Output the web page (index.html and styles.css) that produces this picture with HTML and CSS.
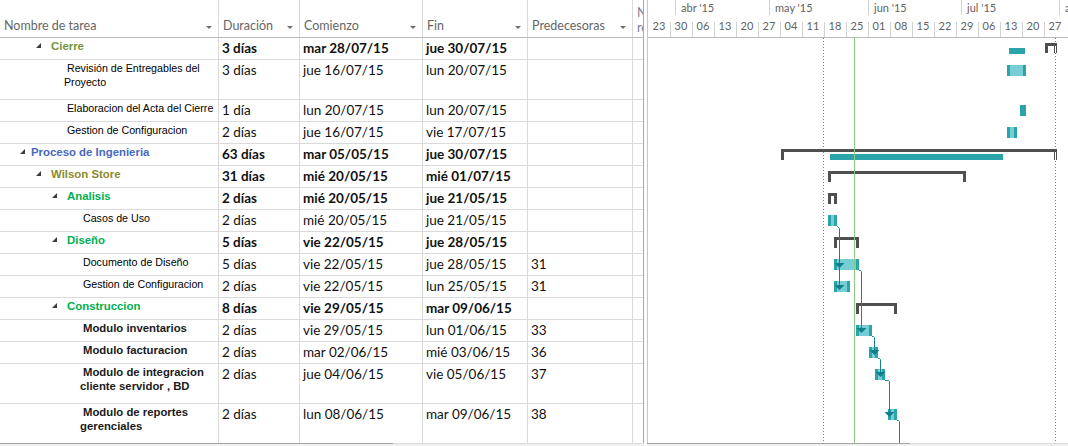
FILE: index.html
```html
<!DOCTYPE html>
<html lang="es">
<head>
<meta charset="utf-8">
<title>Diagrama de Gantt</title>
<link rel="stylesheet" href="styles.css">
</head>
<body>
<div class="app">
  <div class="main">
    <div class="tbl">
      <div class="row hrow">
        <div class="c w-name hc"><span>Nombre de tarea</span><i class="dd"></i></div>
        <div class="c w-dur hc"><span>Duración</span><i class="dd"></i></div>
        <div class="c w-start hc"><span>Comienzo</span><i class="dd"></i></div>
        <div class="c w-fin hc"><span>Fin</span><i class="dd"></i></div>
        <div class="c w-pred hc"><span>Predecesoras</span><i class="dd"></i></div>
        <div class="c w-n hn">Nombres de los<br>recursos</div>
      </div>

      <div class="row">
        <div class="c w-name nm sum l1"><svg class="tg" viewBox="0 0 5 5"><path d="M5 0V5H0Z"/></svg><span class="tx col-cierre">Cierre</span></div>
        <div class="c w-dur d b">3 días</div>
        <div class="c w-start d b">mar 28/07/15</div>
        <div class="c w-fin d b">jue 30/07/15</div>
        <div class="c w-pred d"></div>
        <div class="c w-n"></div>
      </div>
      <div class="row tall">
        <div class="c w-name nm task t2"><span class="tx">Revisión de Entregables del Proyecto</span></div>
        <div class="c w-dur d">3 días</div>
        <div class="c w-start d">jue 16/07/15</div>
        <div class="c w-fin d">lun 20/07/15</div>
        <div class="c w-pred d"></div>
        <div class="c w-n"></div>
      </div>
      <div class="row">
        <div class="c w-name nm task t2"><span class="tx">Elaboracion del Acta del Cierre</span></div>
        <div class="c w-dur d">1 día</div>
        <div class="c w-start d">lun 20/07/15</div>
        <div class="c w-fin d">lun 20/07/15</div>
        <div class="c w-pred d"></div>
        <div class="c w-n"></div>
      </div>
      <div class="row">
        <div class="c w-name nm task t2"><span class="tx">Gestion de Configuracion</span></div>
        <div class="c w-dur d">2 días</div>
        <div class="c w-start d">jue 16/07/15</div>
        <div class="c w-fin d">vie 17/07/15</div>
        <div class="c w-pred d"></div>
        <div class="c w-n"></div>
      </div>
      <div class="row">
        <div class="c w-name nm sum l0"><svg class="tg" viewBox="0 0 5 5"><path d="M5 0V5H0Z"/></svg><span class="tx col-proc">Proceso de Ingenieria</span></div>
        <div class="c w-dur d b">63 días</div>
        <div class="c w-start d b">mar 05/05/15</div>
        <div class="c w-fin d b">jue 30/07/15</div>
        <div class="c w-pred d"></div>
        <div class="c w-n"></div>
      </div>
      <div class="row">
        <div class="c w-name nm sum l1"><svg class="tg" viewBox="0 0 5 5"><path d="M5 0V5H0Z"/></svg><span class="tx col-wilson">Wilson Store</span></div>
        <div class="c w-dur d b">31 días</div>
        <div class="c w-start d b">mié 20/05/15</div>
        <div class="c w-fin d b">mié 01/07/15</div>
        <div class="c w-pred d"></div>
        <div class="c w-n"></div>
      </div>
      <div class="row">
        <div class="c w-name nm sum l2"><svg class="tg" viewBox="0 0 5 5"><path d="M5 0V5H0Z"/></svg><span class="tx col-green">Analisis</span></div>
        <div class="c w-dur d b">2 días</div>
        <div class="c w-start d b">mié 20/05/15</div>
        <div class="c w-fin d b">jue 21/05/15</div>
        <div class="c w-pred d"></div>
        <div class="c w-n"></div>
      </div>
      <div class="row">
        <div class="c w-name nm task t3"><span class="tx">Casos de Uso</span></div>
        <div class="c w-dur d">2 días</div>
        <div class="c w-start d">mié 20/05/15</div>
        <div class="c w-fin d">jue 21/05/15</div>
        <div class="c w-pred d"></div>
        <div class="c w-n"></div>
      </div>
      <div class="row">
        <div class="c w-name nm sum l2"><svg class="tg" viewBox="0 0 5 5"><path d="M5 0V5H0Z"/></svg><span class="tx col-green">Diseño</span></div>
        <div class="c w-dur d b">5 días</div>
        <div class="c w-start d b">vie 22/05/15</div>
        <div class="c w-fin d b">jue 28/05/15</div>
        <div class="c w-pred d"></div>
        <div class="c w-n"></div>
      </div>
      <div class="row">
        <div class="c w-name nm task t3"><span class="tx">Documento de Diseño</span></div>
        <div class="c w-dur d">5 días</div>
        <div class="c w-start d">vie 22/05/15</div>
        <div class="c w-fin d">jue 28/05/15</div>
        <div class="c w-pred d">31</div>
        <div class="c w-n"></div>
      </div>
      <div class="row">
        <div class="c w-name nm task t3"><span class="tx">Gestion de Configuracion</span></div>
        <div class="c w-dur d">2 días</div>
        <div class="c w-start d">vie 22/05/15</div>
        <div class="c w-fin d">lun 25/05/15</div>
        <div class="c w-pred d">31</div>
        <div class="c w-n"></div>
      </div>
      <div class="row">
        <div class="c w-name nm sum l2"><svg class="tg" viewBox="0 0 5 5"><path d="M5 0V5H0Z"/></svg><span class="tx col-green">Construccion</span></div>
        <div class="c w-dur d b">8 días</div>
        <div class="c w-start d b">vie 29/05/15</div>
        <div class="c w-fin d b">mar 09/06/15</div>
        <div class="c w-pred d"></div>
        <div class="c w-n"></div>
      </div>
      <div class="row">
        <div class="c w-name nm task t3 bold"><span class="tx">Modulo inventarios</span></div>
        <div class="c w-dur d">2 días</div>
        <div class="c w-start d">vie 29/05/15</div>
        <div class="c w-fin d">lun 01/06/15</div>
        <div class="c w-pred d">33</div>
        <div class="c w-n"></div>
      </div>
      <div class="row">
        <div class="c w-name nm task t3 bold"><span class="tx">Modulo facturacion</span></div>
        <div class="c w-dur d">2 días</div>
        <div class="c w-start d">mar 02/06/15</div>
        <div class="c w-fin d">mié 03/06/15</div>
        <div class="c w-pred d">36</div>
        <div class="c w-n"></div>
      </div>
      <div class="row tall">
        <div class="c w-name nm task t3 bold"><span class="tx">Modulo de integracion cliente servidor , BD</span></div>
        <div class="c w-dur d">2 días</div>
        <div class="c w-start d">jue 04/06/15</div>
        <div class="c w-fin d">vie 05/06/15</div>
        <div class="c w-pred d">37</div>
        <div class="c w-n"></div>
      </div>
      <div class="row tall last">
        <div class="c w-name nm task t3 bold"><span class="tx">Modulo de reportes gerenciales</span></div>
        <div class="c w-dur d">2 días</div>
        <div class="c w-start d">lun 08/06/15</div>
        <div class="c w-fin d">mar 09/06/15</div>
        <div class="c w-pred d">38</div>
        <div class="c w-n"></div>
      </div>
    </div>

    <div class="split"></div>

    <div class="gantt">
      <div class="ghead">
        <div class="months">
          <div class="mo m0"></div>
          <div class="mo m1">abr '15</div>
          <div class="mo m2">may '15</div>
          <div class="mo m3">jun '15</div>
          <div class="mo m4">jul '15</div>
          <div class="mo m5">ago '15</div>
        </div>
        <div class="weeks">
          <div class="wk">23</div>
          <div class="wk">30</div>
          <div class="wk">06</div>
          <div class="wk">13</div>
          <div class="wk">20</div>
          <div class="wk">27</div>
          <div class="wk">04</div>
          <div class="wk">11</div>
          <div class="wk">18</div>
          <div class="wk">25</div>
          <div class="wk">01</div>
          <div class="wk">08</div>
          <div class="wk">15</div>
          <div class="wk">22</div>
          <div class="wk">29</div>
          <div class="wk">06</div>
          <div class="wk">13</div>
          <div class="wk">20</div>
          <div class="wk">27</div>
        </div>
      </div>
      <svg class="gbody" width="420" height="405" viewBox="0 0 420 405">
        <line class="dot" x1="175.5" y1="0" x2="175.5" y2="405"/>
        <line class="dot" x1="407.5" y1="0" x2="407.5" y2="405"/>

        <g class="sumbar">
          <rect x="397" y="5" width="12" height="3"/><rect x="397" y="5" width="3" height="10"/><rect x="406" y="5" width="3" height="10"/>
          <rect x="133" y="111" width="276" height="3"/><rect x="133" y="111" width="3" height="11"/><rect x="406" y="111" width="3" height="11"/>
          <rect x="180" y="133" width="138" height="3"/><rect x="180" y="133" width="3" height="11"/><rect x="315" y="133" width="3" height="11"/>
          <rect x="180" y="155" width="9" height="3"/><rect x="180" y="155" width="3" height="11"/><rect x="186" y="155" width="3" height="11"/>
          <rect x="186" y="199" width="25" height="3"/><rect x="186" y="199" width="3" height="11"/><rect x="208" y="199" width="3" height="11"/>
          <rect x="208" y="265" width="41" height="3"/><rect x="208" y="265" width="3" height="11"/><rect x="246" y="265" width="3" height="11"/>
        </g>
        <g class="hollow">
          <rect x="407" y="8" width="1" height="7"/>
          <rect x="407" y="114" width="1" height="8"/>
        </g>

        <g class="solid">
          <rect x="361" y="10" width="16" height="6"/>
          <rect x="182" y="116" width="173" height="6"/>
        </g>

        <g class="task">
          <rect class="lt" x="359" y="27" width="19" height="11"/><rect class="dk" x="359" y="27" width="3" height="11"/><rect class="dk" x="375" y="27" width="3" height="11"/>
          <rect class="dk" x="372" y="67" width="6" height="11"/>
          <rect class="lt" x="359" y="89" width="10" height="11"/><rect class="dk" x="359" y="89" width="3" height="11"/><rect class="dk" x="366" y="89" width="3" height="11"/>
          <rect class="lt" x="180" y="177" width="9" height="11"/><rect class="dk" x="180" y="177" width="3" height="11"/><rect class="dk" x="186" y="177" width="3" height="11"/>
          <rect class="lt" x="186" y="221" width="25" height="11"/><rect class="dk" x="186" y="221" width="3" height="11"/><rect class="dk" x="208" y="221" width="3" height="11"/>
          <rect class="lt" x="186" y="243" width="16" height="11"/><rect class="dk" x="186" y="243" width="3" height="11"/><rect class="dk" x="199" y="243" width="3" height="11"/>
          <rect class="lt" x="208" y="287" width="16" height="11"/><rect class="dk" x="208" y="287" width="3" height="11"/><rect class="dk" x="221" y="287" width="3" height="11"/>
          <rect class="lt" x="221" y="309" width="9" height="11"/><rect class="dk" x="221" y="309" width="3" height="11"/><rect class="dk" x="227" y="309" width="3" height="11"/>
          <rect class="lt" x="227" y="331" width="10" height="11"/><rect class="dk" x="227" y="331" width="3" height="11"/><rect class="dk" x="234" y="331" width="3" height="11"/>
          <rect class="lt" x="240" y="371" width="9" height="11"/><rect class="dk" x="240" y="371" width="3" height="11"/><rect class="dk" x="246" y="371" width="3" height="11"/>
        </g>

        <g class="link">
          <path d="M189 188.5H189.5L191.5 190.5V248"/>
          <path d="M211 232.5H212.5L213.5 233.5V291"/>
          <path d="M224 298.5H225.5L226.5 299.5V313"/>
          <path d="M230 320.5H231.5L232.5 321.5V335"/>
          <path d="M237 342.5H240.5L241.5 343.5V375"/>
          <path d="M249 382.5H250.5L251.5 383.5V405"/>
        </g>
        <g class="arrow">
          <path d="M186.5 225H196.5L191.5 230Z"/>
          <path d="M186.5 247H196.5L191.5 252Z"/>
          <path d="M208.5 290H218.5L213.5 295Z"/>
          <path d="M221.5 312H231.5L226.5 317Z"/>
          <path d="M227.5 334H237.5L232.5 339Z"/>
          <path d="M236.5 374H246.5L241.5 379Z"/>
        </g>

        <line class="stat" x1="206.5" y1="0" x2="206.5" y2="405"/>
      </svg>
    </div>
  </div>
  <div class="hscroll">
    <div class="sb thumb1"></div>
    <div class="sb track1"></div>
    <div class="sb gap"></div>
    <div class="sb thumb2"></div>
    <div class="sb track2"></div>
  </div>
</div>
</body>
</html>
```

FILE: styles.css
```css
* { box-sizing: border-box; }
html, body { margin: 0; padding: 0; background: #fff; }
body {
  width: 1068px;
  height: 446px;
  overflow: hidden;
  font-family: "Lato", "Open Sans", sans-serif;
}
.app { display: flex; flex-direction: column; }
.main { display: flex; height: 443px; overflow: hidden; }

/* ---------- table ---------- */
.tbl { width: 644px; flex: none; border-right: 1px solid #a9a9a9; }
.split { width: 3px; flex: none; }

.row { display: flex; height: 22px; border-bottom: 1px solid #dadada; }
.row.tall { height: 40px; }
.row.last { height: 39px; border-bottom: 0; }
.hrow { height: 38px; border-bottom: 1px solid #b9b9b9; }

.c { flex: none; height: 100%; border-right: 1px solid #dadada; overflow: hidden; }
.w-name { width: 219px; }
.w-dur { width: 81px; }
.w-start { width: 123px; }
.w-fin { width: 105px; }
.w-pred { width: 105px; }
.w-n { width: 10px; border-right: 0; }

.hc {
  display: flex;
  justify-content: space-between;
  align-items: flex-start;
  padding: 18px 6px 0 4px;
  font-size: 12.5px;
  line-height: 15px;
  color: #666;
  white-space: nowrap;
}
.dd {
  width: 0; height: 0;
  border-left: 3px solid transparent;
  border-right: 3px solid transparent;
  border-top: 3px solid #6e6e6e;
  margin-top: 8px;
}
.hn {
  padding: 5px 0 0 4px;
  font-size: 12.5px;
  line-height: 15px;
  color: #7a8290;
  white-space: nowrap;
}

.d {
  padding-left: 3px;
  font-size: 13.5px;
  line-height: 21px;
  color: #111;
  white-space: nowrap;
}
.b { font-weight: 700; }

.nm {
  display: flex;
  align-items: flex-start;
  padding-top: 1px;
  font-family: "Liberation Sans", Arial, sans-serif;
  font-size: 10.67px;
  line-height: 14px;
  color: #000;
}
.nm .tx { display: block; }
.tg { width: 5px; height: 5px; flex: none; margin-top: 4px; fill: #3a3a3a; }

.sum { font-size: 11.4px; font-weight: 700; }
.sum.l0 { padding-left: 20px; }
.sum.l0 .tg { margin-right: 6px; }
.sum.l1 { padding-left: 36px; }
.sum.l1 .tg { margin-right: 10px; }
.sum.l2 { padding-left: 52px; }
.sum.l2 .tg { margin-right: 10px; }

.task .tx { text-indent: 3px; }
.task.t2 { padding-left: 64px; }
.task.t3 { padding-left: 80px; }
.task.bold { font-size: 11.33px; font-weight: 700; color: #1a1a1a; }

.col-cierre { color: #76923c; }
.col-proc { color: #4669c2; }
.col-wilson { color: #8c8a2e; }
.col-green { color: #00b050; }

/* ---------- gantt ---------- */
.gantt { width: 421px; flex: none; border-left: 1px solid #c6c6c6; }
.ghead {
  height: 38px;
  border-bottom: 1px solid #b9b9b9;
  font-size: 11px;
  color: #626262;
  white-space: nowrap;
}
.months { display: flex; height: 16px; }
.mo {
  flex: none;
  height: 16px;
  padding-left: 5px;
  line-height: 16px;
  background: linear-gradient(#d2d2d2, #d2d2d2) no-repeat right top / 1px 15px;
}
.m0 { width: 28px; }
.m1 { width: 94px; }
.m2 { width: 99px; }
.m3 { width: 93px; }
.m4 { width: 98px; }
.m5 { flex: 1; background: none; overflow: hidden; }

.weeks { display: flex; height: 21px; margin-top: 0; }
.wk {
  flex: none;
  width: 22px;
  padding-top: 3px;
  line-height: 13px;
  text-align: center;
  background: linear-gradient(#d2d2d2, #d2d2d2) no-repeat left bottom / 1px 15px;
}
.wk:first-child { background: none; }

.gbody { display: block; }
.dot { stroke: #7d7d7d; stroke-width: 1; stroke-dasharray: 1 2; }
.stat { stroke: #8cc886; stroke-width: 1; }
.sumbar { fill: #4f4f4f; }
.hollow { fill: #ffffff; }
.solid { fill: #2aa3aa; }
.task .lt { fill: #77cdd5; }
.task .dk { fill: #2aa3aa; }
.link path { fill: none; stroke: #12848d; stroke-width: 1; }
.arrow { fill: #0f7f88; }

/* ---------- bottom scrollbars ---------- */
.hscroll { display: flex; height: 3px; }
.sb { flex: none; height: 3px; background: #f0f0f0; }
.thumb1 { width: 393px; border-top: 1px solid #a6a6a6; }
.track1 { width: 251px; border-top: 1px solid #dcdcdc; }
.gap { width: 3px; background: #fff; }
.thumb2 { width: 263px; border-top: 1px solid #a6a6a6; }
.track2 { flex: 1; border-top: 1px solid #dcdcdc; }
```
